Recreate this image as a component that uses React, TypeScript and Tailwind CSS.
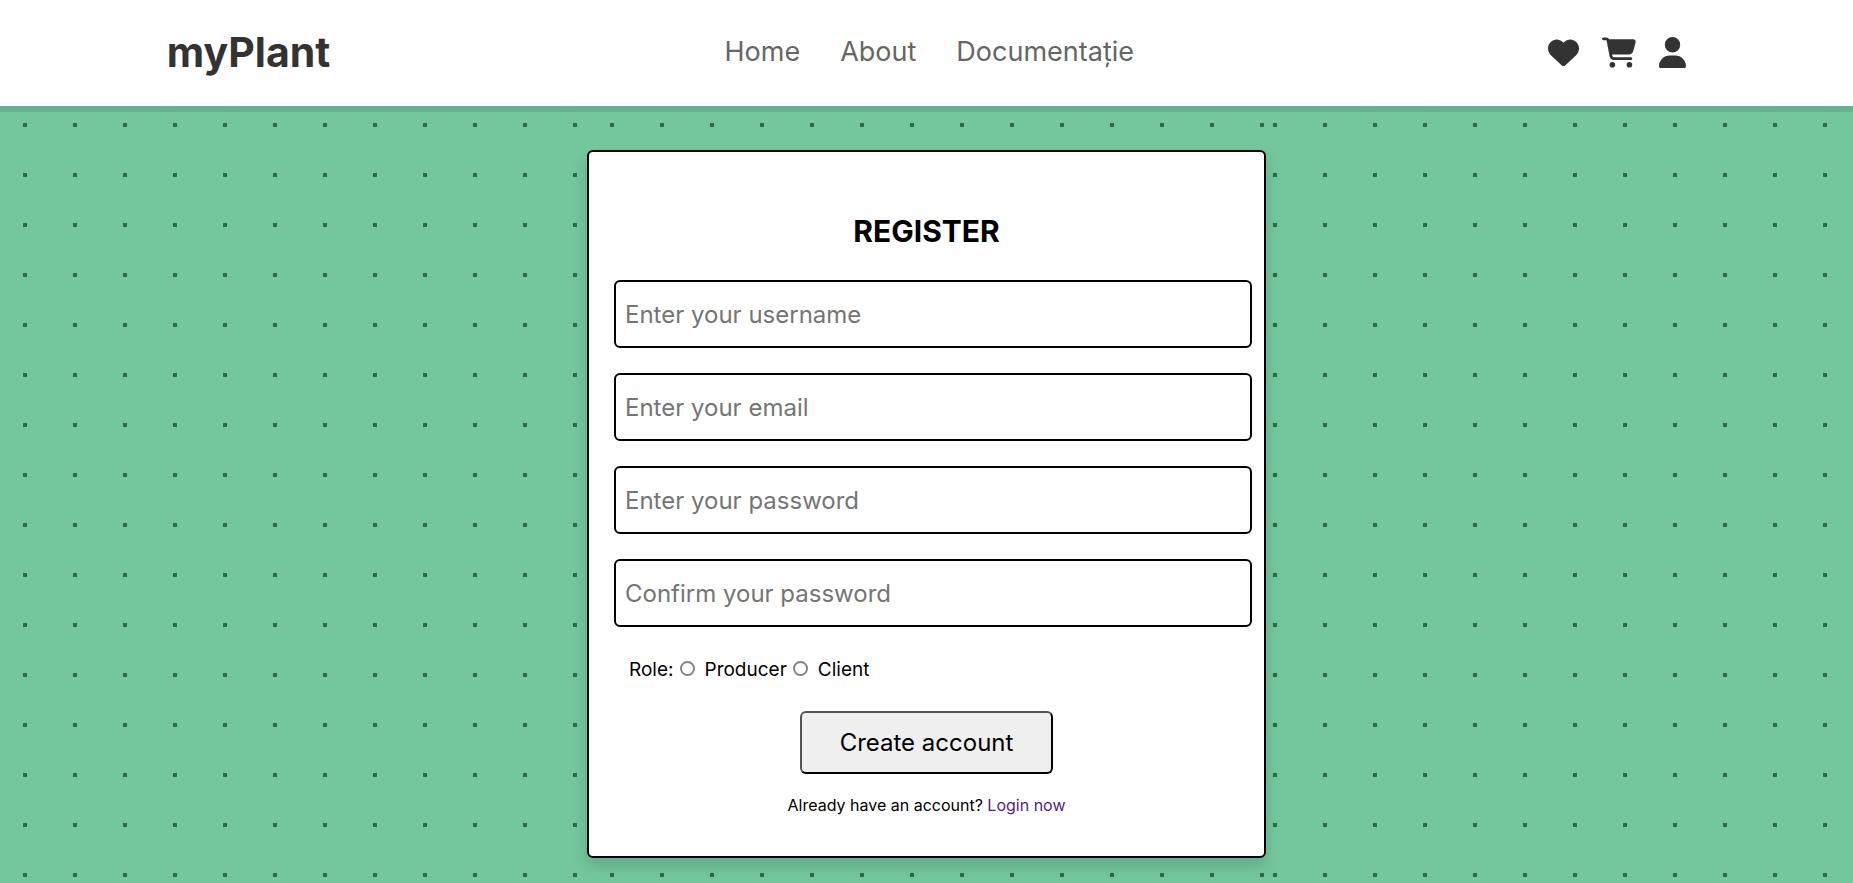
import { FaCartShopping, FaHeart, FaUser } from "react-icons/fa6";

const fields = [
  { id: "username", type: "text", placeholder: "Enter your username" },
  { id: "email", type: "email", placeholder: "Enter your email" },
  { id: "password", type: "password", placeholder: "Enter your password" },
  { id: "confirm", type: "password", placeholder: "Confirm your password" },
];

const roles = ["Producer", "Client"];

function DotPattern({ id }: { id: string }) {
  return (
    <svg className="absolute inset-0 h-full w-full" aria-hidden="true">
      <defs>
        <pattern id={id} width="50" height="50" patternUnits="userSpaceOnUse">
          <rect x="23" y="23" width="4" height="4" fill="#2d6a4f" />
        </pattern>
      </defs>
      <rect width="100%" height="100%" fill={`url(#${id})`} />
    </svg>
  );
}

function Header() {
  return (
    <header className="relative z-10 flex h-[106px] items-center justify-between bg-white px-[9%] pb-px shadow-[0_6px_0_rgba(0,0,0,0.1)]">
      <a href="#home" className="text-[41px] font-bold text-[#333]">
        myPlant
      </a>
      <nav className="flex gap-10 text-[27px] text-[#666]">
        <a href="#home">Home</a>
        <a href="#about">About</a>
        <a href="#docs">Documentație</a>
      </nav>
      <div className="flex items-center gap-[23px] pl-5 text-[#333]">
        <a href="#favorites" aria-label="Favorites">
          <FaHeart className="h-[31px] w-[31px]" />
        </a>
        <a href="#cart" aria-label="Cart">
          <FaCartShopping className="h-[31px] w-[34px]" />
        </a>
        <a href="#account" aria-label="Account">
          <FaUser className="h-[31px] w-[27px]" />
        </a>
      </div>
    </header>
  );
}

function RegisterForm() {
  return (
    <form className="relative flex flex-col items-center rounded-md border-2 border-black bg-white pt-[54px] pr-3 pb-[38px] pl-[25px] shadow-[0_8px_16px_rgba(0,0,0,0.15)]">
      <h1 className="mr-[13px] text-[30px] leading-[50px] font-bold text-black">
        REGISTER
      </h1>
      <div className="mt-6 flex w-full flex-col gap-[25px]">
        {fields.map((field) => (
          <input
            key={field.id}
            id={field.id}
            type={field.type}
            placeholder={field.placeholder}
            aria-label={field.placeholder}
            className="h-[68px] w-full rounded-md border-2 border-black bg-white px-[9px] text-[24px] placeholder:text-[#757575]"
          />
        ))}
      </div>
      <div className="mt-7 flex items-center self-start pl-[15px] text-[19px] leading-[30px] text-black">
        <span>Role:</span>
        {roles.map((role) => (
          <label key={role} className="flex items-center">
            <input
              type="radio"
              name="role"
              value={role}
              className="mr-[10px] mb-1 ml-[6px] h-[15px] w-[15px] appearance-none rounded-full border-2 border-[#858585] bg-white checked:border-4 checked:border-[#0075ff]"
            />
            {role}
          </label>
        ))}
      </div>
      <button
        type="submit"
        className="mt-[26px] mr-[13px] h-[63px] rounded-md border-2 border-t-[#555] border-r-black border-b-black border-l-[#555] bg-[#efefef] px-[38px] text-[24px] text-black"
      >
        Create account
      </button>
      <p className="mt-[18px] mr-[13px] text-[16px] leading-[26px] text-black">
        Already have an account?{" "}
        <a href="#login" className="text-[#551a8b]">
          Login now
        </a>
      </p>
    </form>
  );
}

export default function App() {
  return (
    <div className="relative min-h-screen bg-[#74c79d] font-['Inter',sans-serif]">
      <DotPattern id="page-dots" />
      <Header />
      <main className="flex justify-center">
        <section className="relative -mt-[106px] w-full max-w-[679px] bg-[#74c79d] pt-[150px] pb-[25px]">
          <DotPattern id="section-dots" />
          <RegisterForm />
        </section>
      </main>
    </div>
  );
}
